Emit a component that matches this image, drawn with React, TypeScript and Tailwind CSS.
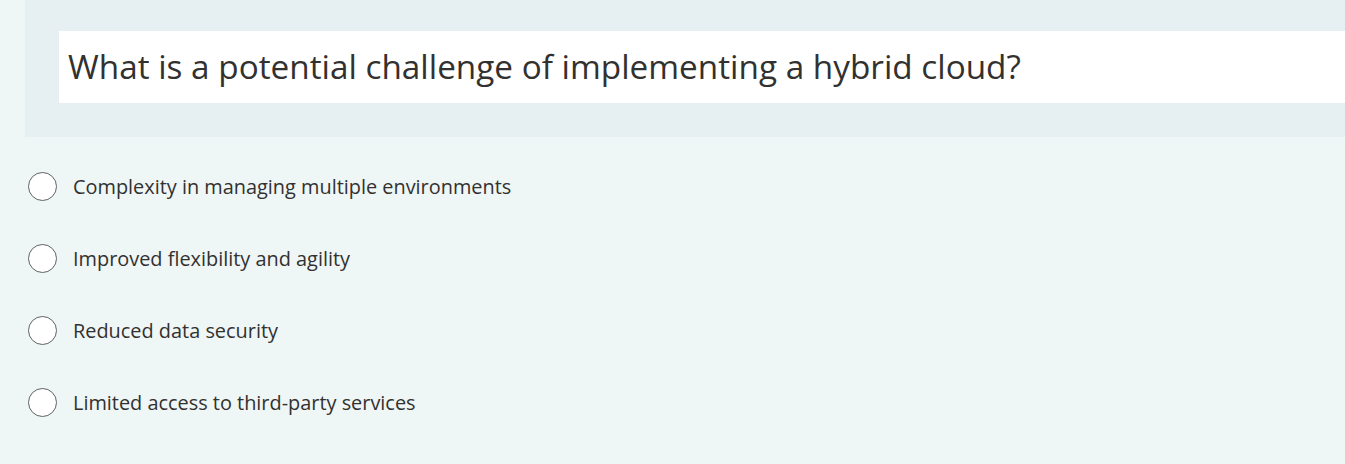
import React from 'react';

const options = [
  'Complexity in managing multiple environments',
  'Improved flexibility and agility',
  'Reduced data security',
  'Limited access to third-party services',
];

const App: React.FC = () => {
  return (
    <div
      className="w-[1345px] h-[464px] overflow-hidden bg-[#eff6f6] text-[#323130]"
      style={{ fontFamily: '"Open Sans", "Noto Sans", sans-serif' }}
    >
      {/* question header */}
      <div className="ml-[25px] h-[137px] bg-[#e6eff2] pt-[31px] pl-[34px]">
        <div className="h-[72px] bg-white flex items-center pl-[9px]">
          <h1 className="text-[33.3px] leading-none text-[#323130]">
            What is a potential challenge of implementing a hybrid cloud?
          </h1>
        </div>
      </div>

      {/* answers */}
      <div className="pt-[35px] pl-[28px] flex flex-col gap-[43px]">
        {options.map((opt) => (
          <label key={opt} className="flex items-center h-[29px] cursor-pointer">
            <span className="w-[29px] h-[29px] rounded-full border-[1.5px] border-[#616161] bg-white shrink-0" />
            <span className="ml-[16px] text-[19.9px] leading-none text-[#323130]">{opt}</span>
          </label>
        ))}
      </div>
    </div>
  );
};

export default App;
